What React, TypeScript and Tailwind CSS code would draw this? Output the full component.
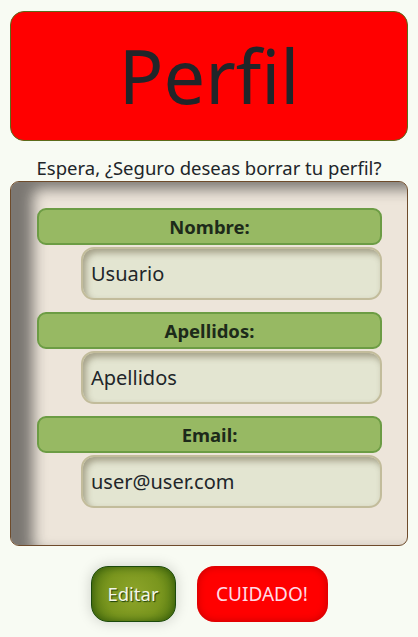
import React from "react";

const font = { fontFamily: '"Noto Sans", "Open Sans", sans-serif' };

function Field({ label, value }: { label: string; value: string }) {
  return (
    <div className="flex flex-col">
      <div className="h-[37px] rounded-[9px] border-2 border-[#6c9c44] bg-[#97b963] flex items-center justify-center text-[18.5px] font-bold text-[#1d2a1a]">
        {label}
      </div>
      <div className="ml-[44px] mt-[2px] h-[53px] rounded-[13px] bg-[#e3e5d1] border-2 border-[#c2bc9b] shadow-[inset_3px_4px_6px_rgba(90,80,50,0.45)] flex items-center pl-[8px] text-[20px] text-[#212529]">
        {value}
      </div>
    </div>
  );
}

export default function App() {
  return (
    <div className="min-h-[637px] bg-[#f8fbf3] px-[10px] pt-[11px]" style={font}>
      {/* Header */}
      <div className="h-[130px] rounded-[14px] bg-[#ff0000] border border-[#5d6b1a] flex items-center justify-center">
        <h1 className="text-[74px] leading-none text-[#212529]">Perfil</h1>
      </div>

      <p className="mt-[14px] text-center text-[18.5px] leading-[26px] text-[#212529]">
        Espera, ¿Seguro deseas borrar tu perfil?
      </p>

      {/* Card */}
      <div className="h-[365px] rounded-[9px] border border-[#6e4b2b] bg-[#ede5da] shadow-[inset_22px_7px_14px_rgba(30,30,30,0.55)] pl-[26px] pr-[25px] pt-[26px] flex flex-col gap-[12px]">
        <Field label="Nombre:" value="Usuario" />
        <Field label="Apellidos:" value="Apellidos" />
        <Field label="Email:" value="user@user.com" />
      </div>

      {/* Buttons */}
      <div className="mt-[20px] flex justify-center gap-[21px]">
        <button className="w-[85px] h-[56px] rounded-[17px] border border-[#1c4a0c] bg-[radial-gradient(circle,#8ea52a_0%,#7a961e_55%,#4e7410_100%)] shadow-[0_0_14px_rgba(0,0,0,0.18),inset_0_0_8px_rgba(20,60,0,0.6)] text-[18.5px] text-[#f4f6e8] [text-shadow:1px_1px_1px_rgba(0,40,0,0.8)]">
          Editar
        </button>
        <button className="w-[131px] h-[56px] rounded-[18px] bg-[#ff0000] shadow-[inset_0_0_8px_rgba(150,0,0,0.6)] text-[19px] text-[#ffdbe6]">
          CUIDADO!
        </button>
      </div>
    </div>
  );
}
